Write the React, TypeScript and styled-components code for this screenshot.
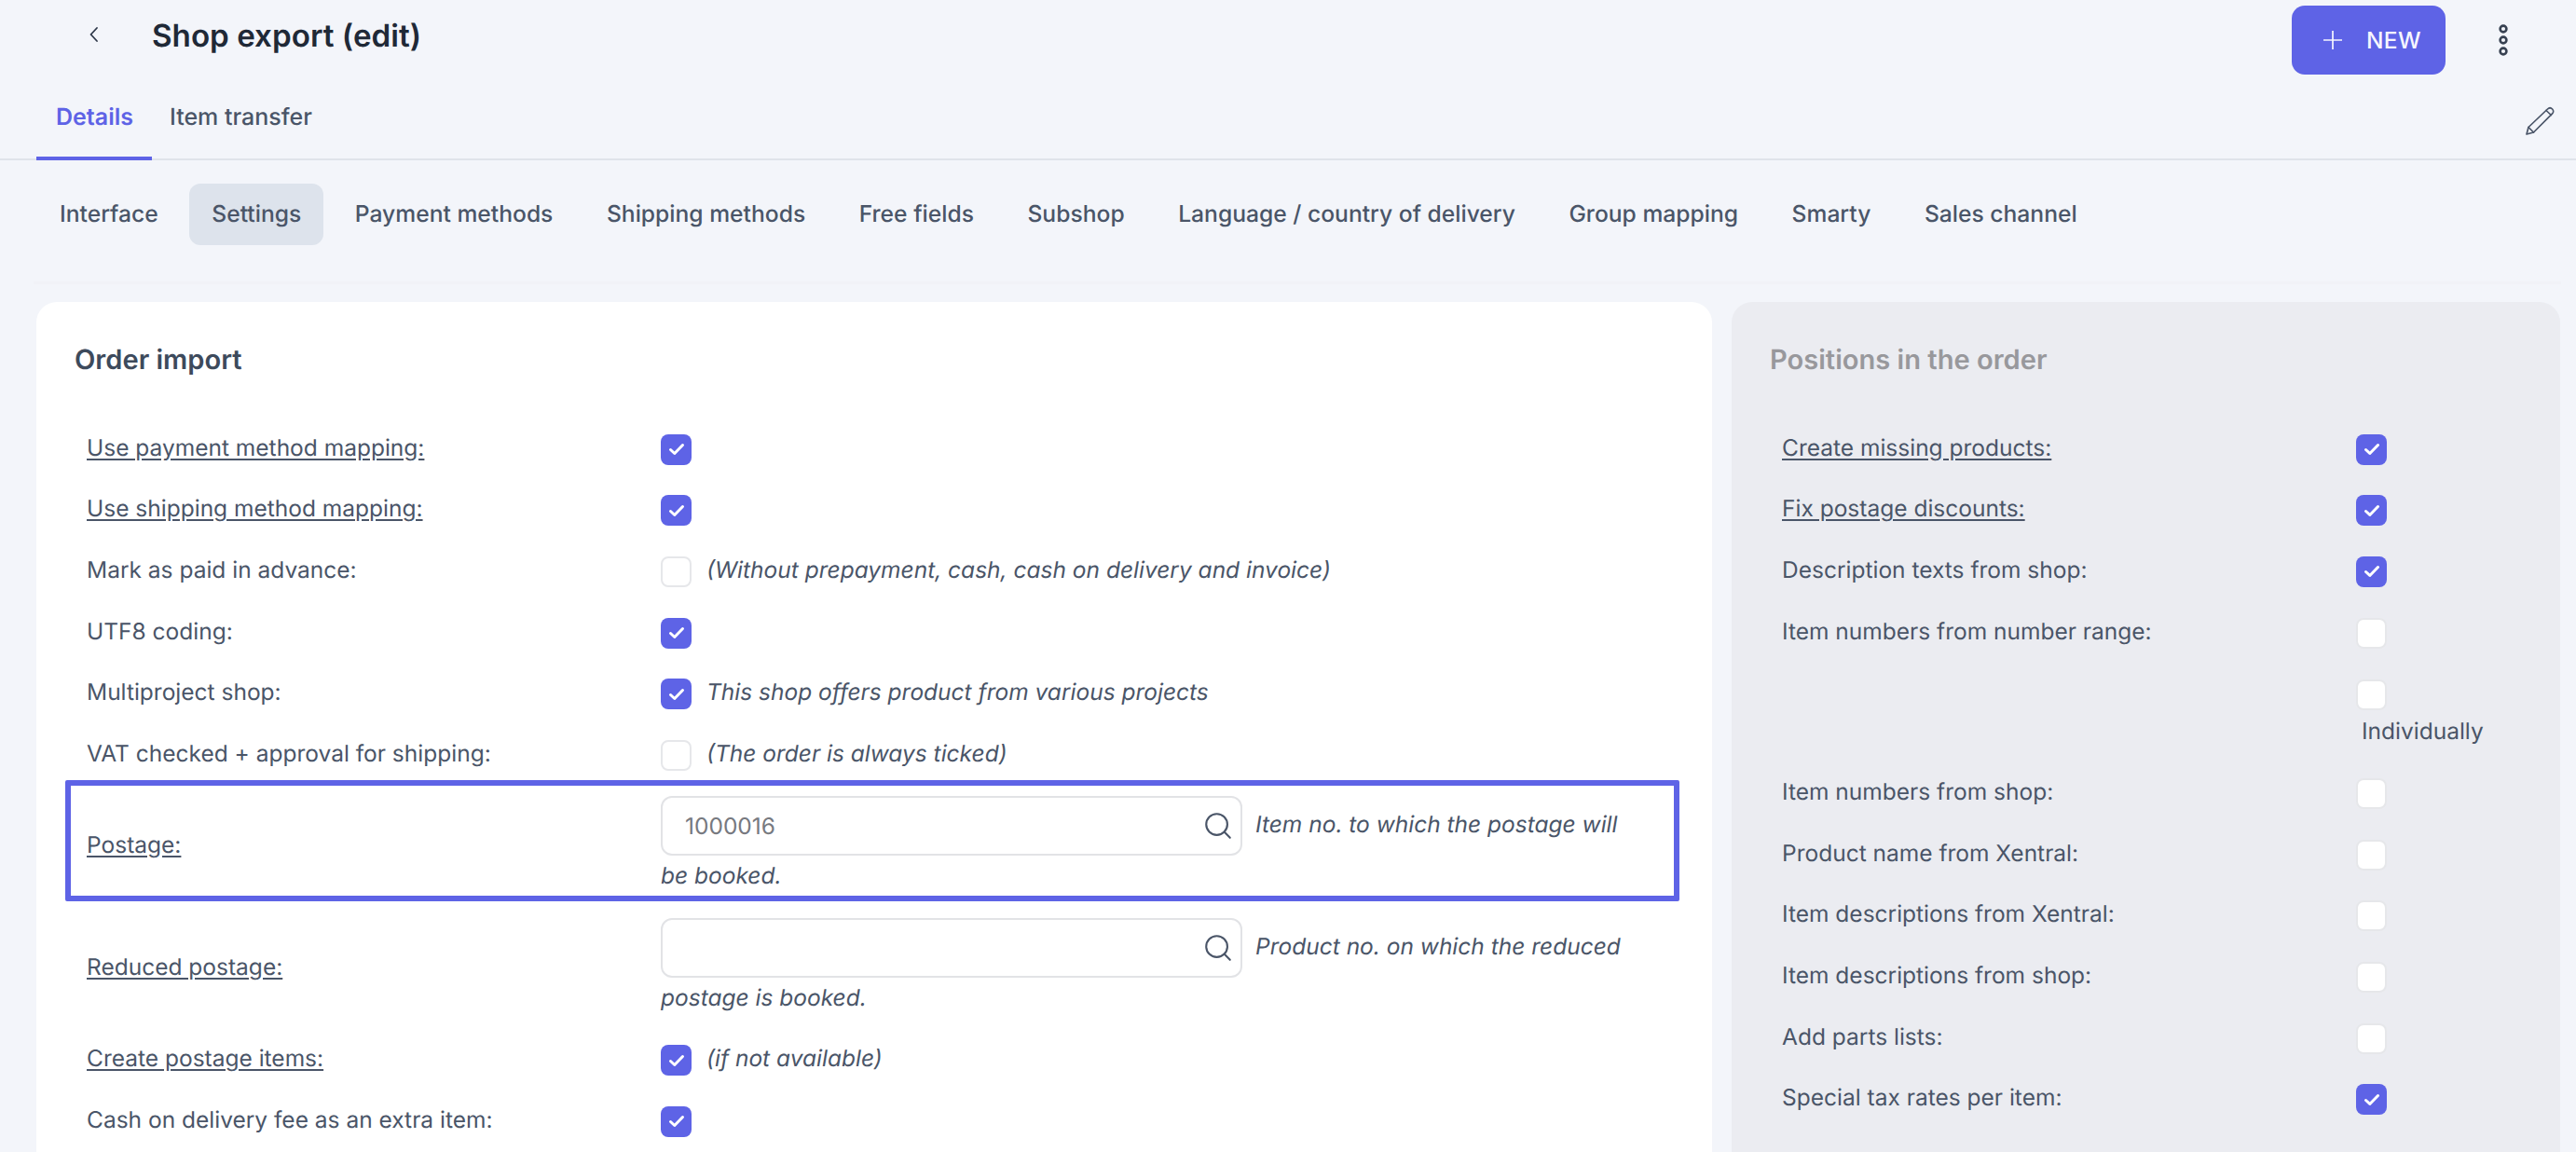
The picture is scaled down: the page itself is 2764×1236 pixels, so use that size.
import React from "react";
import styled, { createGlobalStyle } from "styled-components";
import { Search } from "lucide-react";

const Global = createGlobalStyle`
  html, body { margin: 0; padding: 0; background: #f3f5fa; }
  body { font-family: Inter, "Noto Sans", sans-serif; color: #4a5568; text-rendering: geometricPrecision; }
  * { box-sizing: border-box; }
`;

const Page = styled.div`
  width: 2764px;
  height: 1236px;
  overflow: hidden;
  background: #f3f5fa;
`;

const Header = styled.header`
  display: flex;
  align-items: center;
  height: 84px;
  padding: 6px 70px 4px 95px;
`;

const BackIcon = styled.svg`
  width: 11px;
  height: 18px;
  margin-top: -13px;
  flex: none;
`;

const Title = styled.h1`
  margin: -8px 0 0 57px;
  font-size: 33.2px;
  line-height: 40px;
  font-weight: 600;
  color: #1f2937;
  flex: 1;
`;

const NewButton = styled.button`
  display: flex;
  align-items: center;
  gap: 26px;
  width: 165px;
  height: 74px;
  padding: 0 0 0 34px;
  border: 0;
  border-radius: 14px;
  background: #5e63e6;
  color: #f6f6fe;
  font: 500 24.5px Inter, sans-serif;
  letter-spacing: 0.3px;
`;

const KebabIcon = styled.svg`
  width: 16px;
  height: 44px;
  margin: 0 0 0 54px;
  flex: none;
`;

const TabBar = styled.nav`
  display: flex;
  align-items: stretch;
  height: 88px;
  padding: 0 23px 0 39px;
  border-bottom: 2px solid #dfe3ea;
`;

const Tab = styled.div<{ $active?: boolean }>`
  display: flex;
  align-items: center;
  height: 88px;
  padding: 0 ${(p) => (p.$active ? "20px 0 21px" : "19px")};
  border-bottom: 4px solid ${(p) => (p.$active ? "#5e63e6" : "transparent")};
  color: ${(p) => (p.$active ? "#5e63e6" : "#4a5568")};
  font-size: 25px;
  font-weight: ${(p) => (p.$active ? 600 : 500)};
`;

const PencilIcon = styled.svg`
  width: 32px;
  height: 32px;
  margin: 30px 0 0 auto;
  flex: none;
`;

const SubTabs = styled.div`
  display: flex;
  gap: 9.5px;
  padding: 25px 0 0 40px;
`;

const SubTab = styled.div<{ $active?: boolean }>`
  display: flex;
  align-items: center;
  height: 66px;
  padding: 0 24px 2px;
  border-radius: 12px;
  background: ${(p) => (p.$active ? "#dde3ec" : "transparent")};
  color: #4a5568;
  font-size: 24.65px;
  font-weight: 500;
  white-space: nowrap;
`;

const Divider = styled.div`
  height: 3px;
  margin: 39px 16px 19px 36px;
  background: #f1f2f7;
`;

const Columns = styled.div`
  display: grid;
  grid-template-columns: 1798px 889px;
  gap: 21px;
  padding-left: 39px;
`;

const Card = styled.section<{ $muted?: boolean }>`
  height: 960px;
  padding: 44px 35px 0 41px;
  border-radius: 22px;
  background: ${(p) => (p.$muted ? "#ebecf1" : "#ffffff")};
`;

const CardTitle = styled.h2<{ $muted?: boolean }>`
  margin: 0 0 42px;
  font-size: 29.1px;
  line-height: 38px;
  font-weight: 600;
  color: ${(p) => (p.$muted ? "#98989c" : "#3d4a5c")};
`;

const Row = styled.div<{ $height?: number }>`
  position: relative;
  display: grid;
  grid-template-columns: 616px 1fr;
  align-items: center;
  height: ${(p) => p.$height ?? 65.6}px;
  padding: 0 37px 0 13px;
  font-size: 24.5px;
  line-height: 42px;
`;

const Label = styled.div<{ $link?: boolean }>`
  text-decoration: ${(p) => (p.$link ? "underline" : "none")};
  text-underline-offset: 3px;
  margin-top: -2px;
`;

const Value = styled.div`
  display: flex;
  align-items: center;
  gap: 16px;
`;

const Hint = styled.em`
  font-style: italic;
  margin-top: -2px;
`;

const WrapValue = styled.div`
  align-self: start;
  padding-top: 12px;
`;

const Highlight = styled.div`
  position: absolute;
  left: -10px;
  right: 0;
  top: -5px;
  height: 130px;
  border: 6px solid #5e63e6;
  border-radius: 2px;
  pointer-events: none;
`;

const InputBox = styled.span`
  display: inline-flex;
  align-items: center;
  justify-content: space-between;
  vertical-align: middle;
  width: 624px;
  height: 64px;
  margin-right: 14px;
  padding: 0 7px 0 24px;
  background: #fff;
  border: 2px solid #e2e3e6;
  border-radius: 12px;
  color: #77797f;
`;

const SearchGlyph = styled(Search)`
  color: #4a5568;
  flex: none;
`;

const Box = styled.span<{ $checked?: boolean }>`
  display: flex;
  align-items: center;
  justify-content: center;
  flex: none;
  width: 33px;
  height: 33px;
  margin-top: 3px;
  border-radius: 8px;
  background: ${(p) => (p.$checked ? "#5e63e6" : "#ffffff")};
  border: ${(p) => (p.$checked ? "0" : "2px solid #e6e7ea")};
`;

const StackValue = styled.div`
  align-self: start;
  padding-top: 16px;
`;

const SubLabel = styled.div`
  margin: 1px 0 0 6px;
`;

const Check = ({ on }: { on?: boolean }) => (
  <Box $checked={on}>
    {on && (
      <svg width="20" height="20" viewBox="0 0 20 20" fill="none">
        <path d="M3.5 10.5 L7.8 14.5 L16.5 5.5" stroke="#fff" strokeWidth="3" strokeLinecap="round" strokeLinejoin="round" />
      </svg>
    )}
  </Box>
);

const Field = ({ value, first, second }: { value?: string; first: string; second: string }) => (
  <WrapValue>
    <InputBox>
      <span>{value}</span>
      <SearchGlyph size={34} strokeWidth={1.5} />
    </InputBox>
    <em>{first}</em> <em>{second}</em>
  </WrapValue>
);

const CheckRow = ({ label, on, link, hint }: { label: string; on?: boolean; link?: boolean; hint?: string }) => (
  <Row>
    <Label $link={link}>{label}</Label>
    <Value>
      <Check on={on} />
      {hint && <Hint>{hint}</Hint>}
    </Value>
  </Row>
);

const subTabs = ["Interface", "Settings", "Payment methods", "Shipping methods", "Free fields", "Subshop", "Language / country of delivery", "Group mapping", "Smarty", "Sales channel"];

export default function App() {
  return (
    <Page>
      <Global />
      <Header>
        <BackIcon viewBox="0 0 11 18" fill="none">
          <path d="M9 2 L2.5 9 L9 16" stroke="#2d3748" strokeWidth="1.8" strokeLinecap="round" strokeLinejoin="round" />
        </BackIcon>
        <Title>Shop export (edit)</Title>
        <NewButton>
          <svg width="20" height="20" viewBox="0 0 20 20" fill="none">
            <path d="M10 0 V20 M0 10 H20" stroke="#f6f6fe" strokeWidth="1.7" />
          </svg>
          NEW
        </NewButton>
        <KebabIcon viewBox="0 0 16 44" fill="none" stroke="#374151" strokeWidth="2.6">
          <circle cx="8" cy="10" r="3.4" />
          <circle cx="8" cy="22" r="3.4" />
          <circle cx="8" cy="34" r="3.4" />
        </KebabIcon>
      </Header>
      <TabBar>
        <Tab $active>Details</Tab>
        <Tab>Item transfer</Tab>
        <PencilIcon viewBox="0 0 32 32" fill="none" stroke="#4a5568" strokeWidth="1.7" strokeLinejoin="round" strokeLinecap="round">
          <path d="M2 30 L4 22.5 L24.5 3 C26 1.6 28.2 1.6 29.6 3 C31 4.4 31 6.4 29.6 7.8 L9.5 28 Z" />
          <path d="M4 22.5 L9.5 28 M23 4.5 L28.3 9.5" />
        </PencilIcon>
      </TabBar>
      <SubTabs>
        {subTabs.map((t) => (
          <SubTab key={t} $active={t === "Settings"}>{t}</SubTab>
        ))}
      </SubTabs>
      <Divider />
      <Columns>
        <Card>
          <CardTitle>Order import</CardTitle>
          <CheckRow label="Use payment method mapping:" link on />
          <CheckRow label="Use shipping method mapping:" link on />
          <CheckRow label="Mark as paid in advance:" hint="(Without prepayment, cash, cash on delivery and invoice)" />
          <CheckRow label="UTF8 coding:" on />
          <CheckRow label="Multiproject shop:" on hint="This shop offers product from various projects" />
          <CheckRow label="VAT checked + approval for shipping:" hint="(The order is always ticked)" />
          <Row $height={131}>
            <Label $link>Postage:</Label>
            <Field value="1000016" first="Item no. to which the postage will" second="be booked." />
            <Highlight />
          </Row>
          <Row $height={131}>
            <Label $link>Reduced postage:</Label>
            <Field first="Product no. on which the reduced" second="postage is booked." />
          </Row>
          <CheckRow label="Create postage items:" link on hint="(if not available)" />
          <CheckRow label="Cash on delivery fee as an extra item:" on />
        </Card>
        <Card $muted>
          <CardTitle $muted>Positions in the order</CardTitle>
          <CheckRow label="Create missing products:" link on />
          <CheckRow label="Fix postage discounts:" link on />
          <CheckRow label="Description texts from shop:" on />
          <CheckRow label="Item numbers from number range:" />
          <Row $height={107}>
            <span />
            <StackValue>
              <Check />
              <SubLabel>Individually</SubLabel>
            </StackValue>
          </Row>
          <CheckRow label="Item numbers from shop:" />
          <CheckRow label="Product name from Xentral:" />
          <CheckRow label="Item descriptions from Xentral:" />
          <CheckRow label="Item descriptions from shop:" />
          <CheckRow label="Add parts lists:" />
          <CheckRow label="Special tax rates per item:" on />
        </Card>
      </Columns>
    </Page>
  );
}
